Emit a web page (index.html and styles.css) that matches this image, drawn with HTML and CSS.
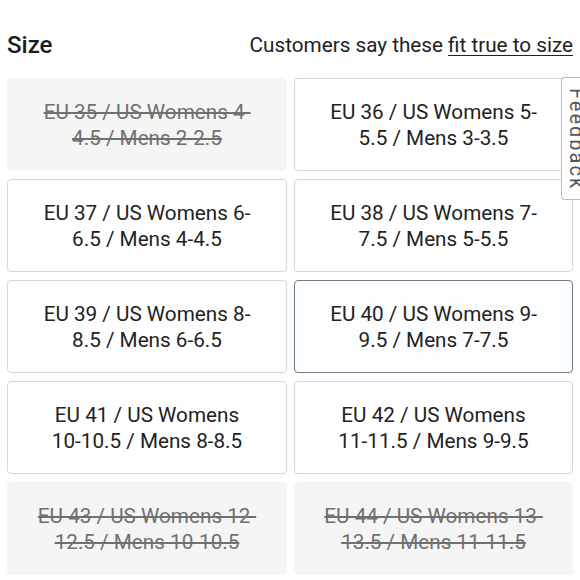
FILE: index.html
```html
<!DOCTYPE html>
<html>
<head>
<meta charset="utf-8">
<link rel="stylesheet" href="styles.css">
</head>
<body>
<div class="page">
  <div class="header">
    <div class="title">Size</div>
    <div class="note">Customers say these <span class="fit">fit true to size</span></div>
  </div>
  <div class="grid">
    <div class="card disabled"><span>EU 35 / US Womens 4-<br>4.5 / Mens 2-2.5</span></div>
    <div class="card"><span>EU 36 / US Womens 5-<br>5.5 / Mens 3-3.5</span></div>
    <div class="card"><span>EU 37 / US Womens 6-<br>6.5 / Mens 4-4.5</span></div>
    <div class="card"><span>EU 38 / US Womens 7-<br>7.5 / Mens 5-5.5</span></div>
    <div class="card"><span>EU 39 / US Womens 8-<br>8.5 / Mens 6-6.5</span></div>
    <div class="card selected"><span>EU 40 / US Womens 9-<br>9.5 / Mens 7-7.5</span></div>
    <div class="card"><span>EU 41 / US Womens<br>10-10.5 / Mens 8-8.5</span></div>
    <div class="card"><span>EU 42 / US Womens<br>11-11.5 / Mens 9-9.5</span></div>
    <div class="card disabled"><span>EU 43 / US Womens 12-<br>12.5 / Mens 10-10.5</span></div>
    <div class="card disabled"><span>EU 44 / US Womens 13-<br>13.5 / Mens 11-11.5</span></div>
  </div>
  <div class="feedback">Feedback</div>
</div>
</body>
</html>
```

FILE: styles.css
```css
html, body {
  margin: 0;
  padding: 0;
  background: #ffffff;
}
.page {
  position: relative;
  width: 580px;
  height: 580px;
  overflow: hidden;
  padding: 0 7px;
  box-sizing: border-box;
  font-family: Roboto, "Liberation Sans", Arial, sans-serif;
  color: #222222;
}
.header {
  height: 78px;
  padding-top: 12px;
  box-sizing: border-box;
  display: flex;
  align-items: center;
  justify-content: space-between;
}
.title {
  font-size: 24px;
  font-weight: 500;
  color: #1c1c1c;
}
.note {
  font-size: 20.7px;
  color: #222222;
}
.fit {
  text-decoration: underline;
  text-underline-offset: 3px;
  text-decoration-thickness: 1px;
}
.grid {
  display: grid;
  grid-template-columns: 280px 279px;
  grid-auto-rows: 93px;
  column-gap: 7px;
  row-gap: 8px;
}
.card {
  border: 1px solid #d6d6d6;
  border-radius: 4px;
  display: flex;
  align-items: center;
  justify-content: center;
  text-align: center;
  font-size: 20.7px;
  line-height: 26px;
  color: #222222;
  background: #ffffff;
}
.card.disabled {
  background: #f5f5f5;
  border-color: #f5f5f5;
  color: #707070;
  text-decoration: line-through;
  text-decoration-thickness: 1.5px;
}
.card.selected {
  border-color: #6f7a86;
  background: #fcfdff;
}
.feedback {
  position: absolute;
  top: 77px;
  right: -11px;
  width: 30px;
  height: 123px;
  box-sizing: border-box;
  border: 1px solid #b9b9b9;
  border-right: none;
  border-radius: 4px 0 0 4px;
  background: #ffffff;
  writing-mode: vertical-rl;
  font-size: 20px;
  letter-spacing: 2px;
  color: #555555;
  display: flex;
  align-items: center;
  justify-content: flex-start;
  padding-top: 10px;
  padding-left: 1px;
}
```
